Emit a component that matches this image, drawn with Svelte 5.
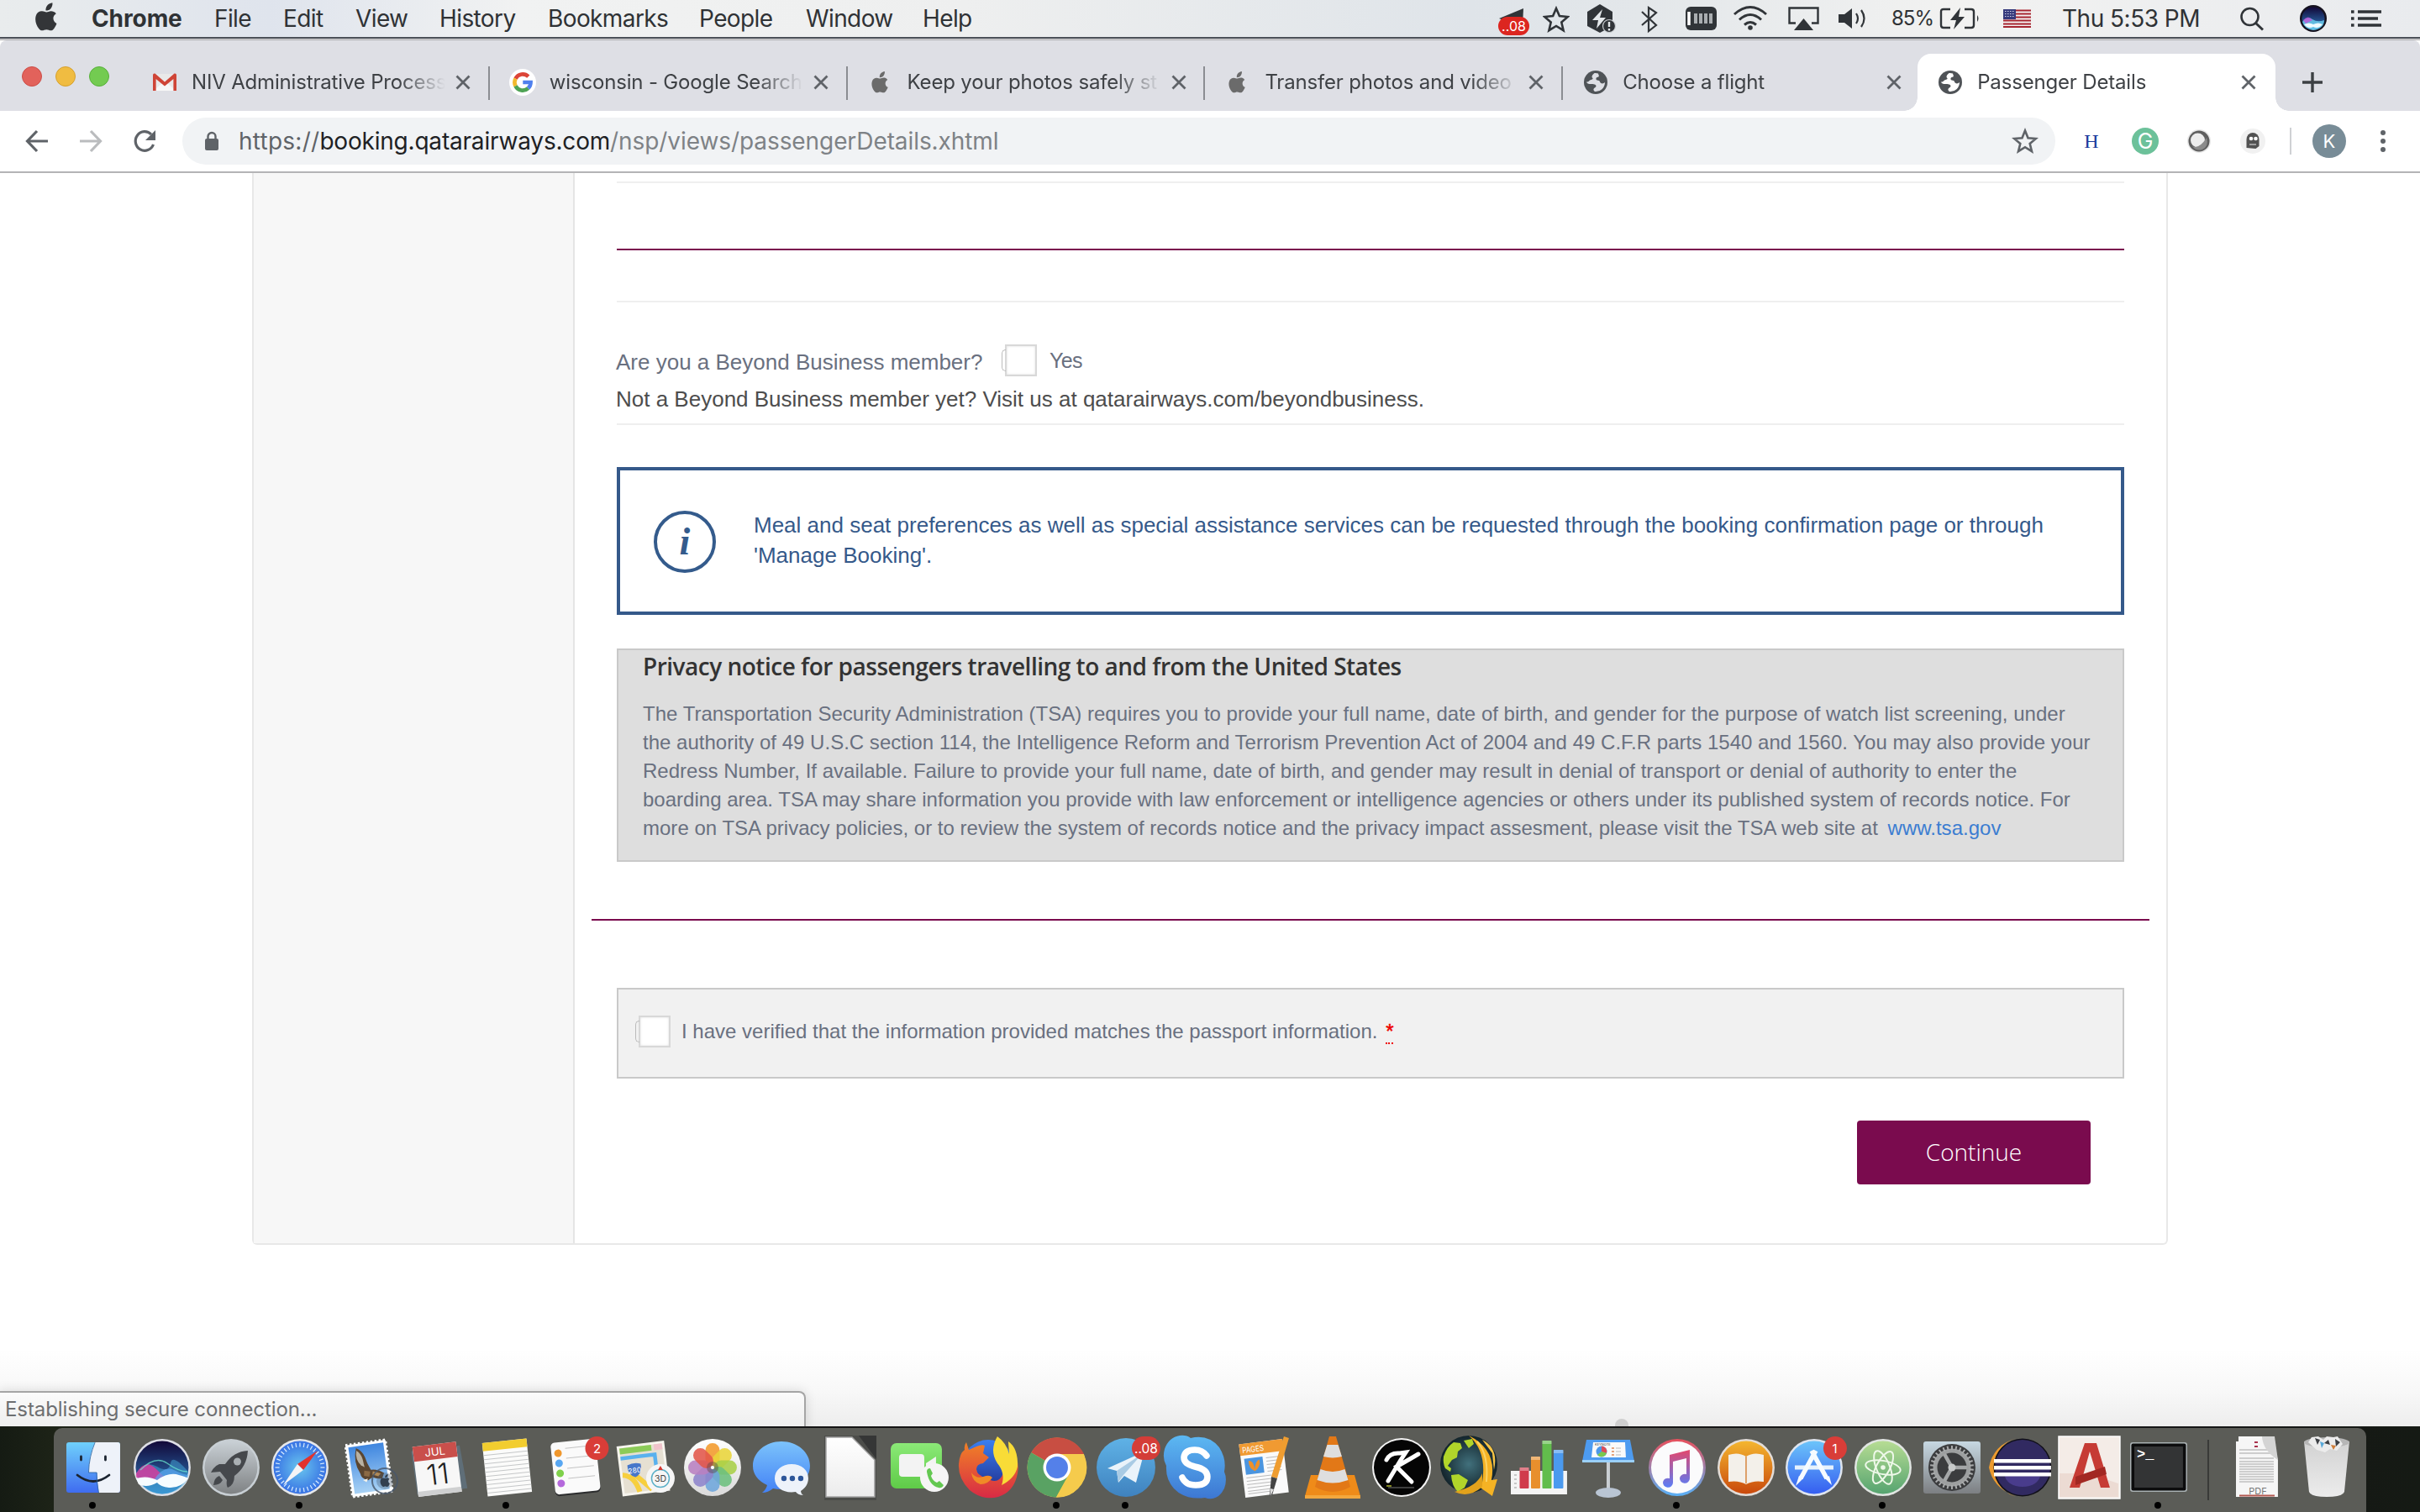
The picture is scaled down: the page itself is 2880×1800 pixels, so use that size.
<script>
  const menus = ['File', 'Edit', 'View', 'History', 'Bookmarks', 'People', 'Window', 'Help'];
  const tabs = [
    { icon: 'gmail', title: 'NIV Administrative Process' },
    { icon: 'google', title: 'wisconsin - Google Search' },
    { icon: 'apple', title: 'Keep your photos safely st' },
    { icon: 'apple', title: 'Transfer photos and video' },
    { icon: 'globe', title: 'Choose a flight', last: true },
    { icon: 'globe', title: 'Passenger Details', active: true }
  ];
  const dock = [
    'finder', 'siri', 'rocket', 'safari', 'mail', 'calendar', 'notes', 'reminders', 'maps', 'photos',
    'messages', 'office', 'facetime', 'firefox', 'chrome', 'telegram', 'skype', 'pages', 'vlc', 'kodi',
    'jdown', 'numbers', 'keynote', 'itunes', 'books', 'appstore', 'atom', 'settings', 'eclipse',
    'autocad', 'terminal', 'sep', 'pdf', 'trash'
  ];
  const running = ['finder', 'safari', 'notes', 'chrome', 'telegram', 'itunes', 'atom', 'terminal'];
  const ticks = Array.from({ length: 36 }, (_, i) => i * 10);
  const teeth = Array.from({ length: 30 }, (_, i) => i * 12);
  const petals = [
    ['#f39a2b', 0], ['#e9d53a', 45], ['#a9cf47', 90], ['#6cbf7d', 135],
    ['#6ea6dc', 180], ['#8d84cc', 225], ['#b87fc0', 270], ['#e3564a', 315]
  ];
  const gradients = [
    ['gFinder', '#6fd0fb', '#3f6cf0'], ['gSiri', '#120838', '#2f7fc4'], ['gRocket', '#c9d0d5', '#7f8284'],
    ['gMail', '#3f86df', '#a8d2f5'], ['gMsg', '#7cc3fb', '#4382f6'], ['gPaper', '#ffffff', '#ececec'],
    ['gGreen', '#8be977', '#5fcb48'], ['gTg', '#5fb2e6', '#3f82bf'], ['gSky', '#5cb8f2', '#3d77d3'],
    ['gTunes', '#e8505c', '#58b0f7'], ['gNote', '#e3476c', '#5b7df6'], ['gBooks', '#f4b62f', '#c9490c'],
    ['gApp', '#6cc4fa', '#355ef0'], ['gAtom', '#b6dc93', '#56a470'], ['gSet', '#c7d8e2', '#7c7f82'],
    ['gTrash', '#d2d2d2', '#ececec'], ['gWhite', '#ffffff', '#dadada'], ['gFox', '#f08127', '#d82a45'],
    ['gFxBlue', '#3b7ff0', '#1f2f8e']
  ];
</script>

{#snippet apple()}
  <path d="M14.700 7.300C16.200 5.500 17.300 3 16.900 0 14.500.2 11.700 1.700 10.400 3.700 9.300 5.300 8.700 7.500 9 9.300c2.200.1 4.300-.5 5.700-2z" transform="translate(3.500 0)" />
  <path d="M13.300 11.200c-1.500 0-3.300-1.300-5.600-1.200C4.700 10.100 2 11.800 1 14.700c-2.200 5.600.2 12.300 3.200 16.100 1.200 1.600 2.500 2.400 4 2.300 1.800-.1 2.800-1.100 5.200-1.100 2.300 0 3.200 1.100 5.100 1.100 1.700 0 2.900-1.200 4-2.700 1.600-2.200 2.500-4.300 2.900-5.700-4.900-2.200-5.500-9-.6-11.800-1.600-2.200-3.900-3-6-3-2.500 0-4 1.300-5.500 1.300z" />
{/snippet}

{#snippet fav(kind, light)}
  {#if kind === 'gmail'}
    <svg width="32" height="32" viewBox="0 0 32 32">
      <path d="M3 6h26v20H3z" fill="#e9e9e9" /><path d="M3 26 16 14l13 12z" fill="#f7f7f7" />
      <path d="M2 26V7.500Q2 5 4.500 5.600L16 15.500 27.500 5.600Q30 5 30 7.500V26h-3.600V12L16 20.500 5.600 12v14z" fill="#cf4436" />
    </svg>
  {:else if kind === 'google'}
    <svg width="32" height="32" viewBox="0 0 32 32">
      <circle cx="16" cy="16" r="16" fill="#fff" />
      <g fill="none" stroke-width="4.600">
        <path d="M7.500 11.600A9.600 9.600 0 0 1 22.800 9.200" stroke="#dc4437" />
        <path d="M7.500 20.400a9.600 9.600 0 0 1 0-8.800" stroke="#f2b92d" />
        <path d="M22.600 23a9.600 9.600 0 0 1-15.100-2.600" stroke="#4ea355" />
        <path d="M16.300 16h9.300a9.600 9.600 0 0 1-3 7" stroke="#4f80ee" />
      </g>
    </svg>
  {:else if kind === 'apple'}
    <svg width="32" height="32" viewBox="-7 -4 42 42" fill="#6b6b6b">{@render apple()}</svg>
  {:else}
    <svg width="32" height="32" viewBox="0 0 32 32">
      <circle cx="16" cy="16" r="14" fill="#4f5357" />
      <path d="M19 5.400A11 11 0 0 0 14.500 5C12.500 6.500 11.500 8 11.500 9.500c0 1.200 1.500 1.500 1 2.500s-3.500 1-4.500 2.500c-.8 1.200-2 1-3 1 .5 2 2.500 2.500 5 2.500 3.500 0 6.500.5 6.500 2.500 0 1.800-2.500 2-3 3.500-.3 1 .2 2 1.500 3A11 11 0 0 0 27 16c-1.500 1.500-3.500 1.800-5 .8-1.300-.8-.8-2.300-2-2.800-1.500-.6-3 0-3.500-1.500-.4-1.500.8-2.500 2-2.700 1.500-.3 1.500-1.800 1-2.800-.3-.6-.5-1-.5-1.600z" fill={light ? '#fff' : '#dedfe5'} />
    </svg>
  {/if}
{/snippet}

{#snippet dockIcon(k)}
  {#if k === 'finder'}
    <rect x="-32" y="17" width="64" height="60" rx="3" fill="url(#gFinder)" />
    <path d="M2 17h27q3 0 3 3v54q0 3-3 3H6.500Q5 66 4.500 53H-5.500Q-5 32 2 17z" fill="#eef2f9" />
    <g stroke="#1b2430" fill="none" stroke-width="2.800" stroke-linecap="round">
      <path d="M-14.500 34v4M14.500 34v4" /><path d="M-19 56Q0 71 19 56" /><path d="M2 17.500Q-5 34-5.500 53H4Q4 66 6.500 77" stroke-width=".8" stroke="#2a5f9a" />
    </g>
  {:else if k === 'siri'}
    <circle cy="47" r="34" fill="#dedfe6" /><circle cy="47" r="31.500" fill="url(#gSiri)" />
    <path d="M-31 54Q-20 38-6 46T10 42t21 10Q32 66 16 75 0 82-16 75-30 66-31 54z" fill="#4ab6e6" opacity=".45" />
    <path d="M-31 54Q-20 36-8 48T8 62Q-4 60-10 63-22 68-31 58z" fill="#e0389c" opacity=".8" />
    <path d="M-10 62Q2 44 14 50T31 56Q26 64 12 66-2 68-10 62z" fill="#5aa4f0" opacity=".7" />
    <path d="M-31 60Q-18 56-6 62 8 52 20 56 28 58 31 60 22 72 8 71-2 70-6 65-18 72-28 67z" fill="#f6fcff" />
    <path d="M-26 50Q-8 32 6 42T30 52" stroke="#6ff0d4" stroke-width="1.500" fill="none" opacity=".7" />
  {:else if k === 'rocket'}
    <circle cy="47" r="34" fill="#c8cfd4" /><circle cy="47" r="31.500" fill="url(#gRocket)" />
    <path d="M20 27Q3 28-7 43l-7 0q-6 2-10 10l11-1 8 10q-1 6 1 9 8-3 8-14Q19 46 20 27z" fill="#45484c" />
    <path d="M-14 57q-6 2-7 11 8 0 11-6z" fill="#45484c" /><circle cx="7.500" cy="40" r="4.500" fill="#aab0b4" />
  {:else if k === 'safari'}
    <circle cy="47" r="34" fill="#e7e8ea" /><circle cy="47" r="31.500" fill="url(#gSafari)" />
    <g stroke="#d8ecff" stroke-width="1.200">{#each ticks as t}<path d="M0 17.500v5" transform="rotate({t} 0 47)" />{/each}</g>
    <path d="M21 27 4 50l-7-7z" fill="#e2322d" /><path d="M-20 68 4 50l-7-7z" fill="#f4f4f6" />
  {:else if k === 'mail'}
    <g transform="rotate(-8 0 47)">
      <rect x="-24" y="17" width="48" height="62" fill="#fff" stroke="#fff" stroke-width="3" stroke-dasharray="2.500 2.500" />
      <rect x="-21" y="20" width="42" height="56" fill="url(#gMail)" />
      <path d="M-12 22q7 4 9 12l2 8 3 8q8 0 15 6l-3 6q-7 0-11-3l-6 3q-8-3-8-9Q-18 38-12 22z" fill="#5b4631" />
      <path d="M-12 25q5 4 6 11l1 10-4-3q-6-8-3-18z" fill="#b9b1a2" /><path d="M-6 50l7 2-2 6-6-2z" fill="#8b6a45" /><path d="M4 52l9 4-3 3-7-3z" fill="#b08a58" /><path d="M-9 61l6-1-2 4z" fill="#f4f0e6" />
    </g>
    <circle cx="19" cy="63" r="15" fill="none" stroke="#48586c" stroke-width="2" opacity=".8" /><circle cx="19" cy="63" r="10" fill="#48586c" opacity=".35" />
    <g transform="translate(13.500 55) scale(.45)" fill="#33404f">{@render apple()}</g>
  {:else if k === 'calendar'}
    <g transform="rotate(-7 0 47)">
      <path d="M-29 24h58l3 52h-60z" fill="#5f6e78" /><rect x="-27" y="19" width="52" height="60" fill="#f7f7f7" /><rect x="-27" y="73" width="52" height="6" fill="#cfd0d1" />
      <rect x="-27" y="19" width="52" height="18" fill="#c94f4b" />
      <text x="-1" y="32.500" font-size="13" fill="#fff" text-anchor="middle">JUL</text>
      <text x="-1" y="67" font-size="34" font-weight="300" fill="#222" text-anchor="middle">11</text>
    </g>
  {:else if k === 'notes'}
    <g transform="rotate(-6 0 47)">
      <rect x="-26" y="15" width="53" height="64" fill="#fbfbfa" /><rect x="-26" y="15" width="53" height="10" fill="#f2cd2f" />
      <g stroke="#c5c7c8" stroke-width="1">{#each [30, 35, 40, 45, 50, 55, 60, 65, 70, 75] as y}<path d="M-26 {y}h53" />{/each}</g>
    </g>
  {:else if k === 'reminders'}
    <g transform="rotate(-6 0 47)">
      <rect x="-27" y="17" width="54" height="62" rx="5" fill="#2c2d2e" /><rect x="-27" y="15" width="54" height="62" rx="5" fill="#fafafa" />
      <circle cx="-19" cy="28" r="4.500" fill="#f0972c" /><circle cx="-19" cy="40" r="4.500" fill="#58a7f2" /><circle cx="-19" cy="52" r="4.500" fill="#7fd14b" /><circle cx="-19" cy="64" r="4.500" fill="#b569dc" />
      <path d="M-10 23h28M-10 35h32M-10 47h32M-10 59h32" stroke="#c4c4c4" stroke-width="1" />
    </g>
    <circle cx="25.500" cy="24" r="14" fill="#d93d38" /><text x="25.500" y="29.500" font-size="15" fill="#fff" text-anchor="middle">2</text>
  {:else if k === 'maps'}
    <g transform="rotate(-7 0 47)">
      <rect x="-30" y="18" width="57" height="60" fill="#f7f5ee" /><rect x="-27" y="21" width="51" height="54" fill="#e6e0d2" />
      <path d="M-27 21h38v7h-38z" fill="#8ccb58" /><path d="M14 21h10v7H14z" fill="#f0c3cb" /><path d="M-27 33H14v22" fill="none" stroke="#59b1ee" stroke-width="4.500" />
      <path d="M-27 53q14 2 18 22M-16 50l22 24" stroke="#f7cf3e" stroke-width="6" fill="none" />
      <path d="M-20 42q8-3 16 0 1 12-8 15-9-3-8-15z" fill="#4877c9" /><text x="-12" y="52" font-size="8.500" fill="#fff" text-anchor="middle">280</text>
    </g>
    <circle cx="19" cy="60" r="17" fill="#f6f6f6" /><circle cx="19" cy="60" r="10.500" fill="none" stroke="#5bb0c8" stroke-width="1.500" />
    <text x="19" y="64" font-size="10.500" fill="#444" text-anchor="middle">3D</text><path d="M19 45l3 5h-6z" fill="#d8382f" />
  {:else if k === 'photos'}
    <circle cy="47" r="34" fill="url(#gWhite)" />
    {#each petals as [c, a]}<rect x="-8.500" y="18" width="17" height="27" rx="8.500" fill={c} opacity=".88" transform="rotate({a} 0 47)" />{/each}
    <circle cy="47" r="7" fill="#5b4848" opacity=".45" /><circle cy="47" r="2" fill="#fff" />
  {:else if k === 'messages'}
    <path d="M0 16c19 0 34 13 34 29S19 73 0 73q-6 0-10-1-6 5-13 5 5-4 6-9-17-8-17-23C-34 29-19 16 0 16z" fill="url(#gMsg)" />
    <path d="M12 43c12 0 20 7 20 17 0 7-4 12-9 15q0 3 3 5-6 0-9-4l-5 .5C1 76.500-8 70-8 60s9-17 20-17z" fill="#edf2fa" />
    <g fill="#2d5699"><circle cx="3" cy="60" r="3.200" /><circle cx="13" cy="60" r="3.200" /><circle cx="23" cy="60" r="3.200" /></g>
  {:else if k === 'office'}
    <path d="M-31 9H31V86h-62z" fill="#4c4d4a" /><path d="M-29 11H2L29 38v44h-58z" fill="url(#gPaper)" stroke="#a3a3a3" stroke-width="1.500" /><path d="M10 9h21v28z" fill="#353636" />
  {:else if k === 'facetime'}
    <rect x="-34" y="18" width="61" height="54" rx="7" fill="url(#gGreen)" /><rect x="-24" y="31" width="30" height="27" rx="4" fill="#f3f3f3" /><path d="M8 42 20 34v22L8 49z" fill="#f3f3f3" />
    <circle cx="18" cy="59" r="17" fill="#f5f5f5" />
    <path d="M9 52q0-4 4-4l3 6-2 3q2 6 7 8l3-2 5 5q-2 4-6 3Q12 69 9 52z" fill="#63c851" />
  {:else if k === 'firefox'}
    <circle cy="45" r="31" fill="url(#gFxBlue)" />
    <path d="M-26 17l3 9 9-4q7-3 10-1l-2 9 7 5-7 7q-8 1-8 7 1 8 11 10Q12 69 18 54L28 28Q38 38 35 54 31 76 12 82-6 87-22 74-36 60-35 43-34 30-28 26-29 21-26 17z" fill="url(#gFox)" />
    <path d="M11 10Q1 27 11 42q10 12 5 26Q32 60 35 46 36 24 24 16L25 31Q22 18 11 10z" fill="#f9dc37" />
    <path d="M-20 53q6 8 14 5 8-3 11 1-5 8-14 8-10-3-11-14z" fill="#f08b27" />
  {:else if k === 'chrome'}
    <circle cy="47" r="35.500" fill="#f5cb4c" />
    <path d="M0 47-30.700 29.200A35.500 35.500 0 0 1 32 31z" fill="#c84e42" /><path d="M-30.700 29.200A35.500 35.500 0 0 0-1 82.500L14 55 0 47z" fill="#59a263" /><path d="M0 31H32q8 24-7 41-10 11-26 10.500L14 56z" fill="#f5cb4c" />
    <circle cy="47" r="16.500" fill="#fff" /><circle cy="47" r="13" fill="#5480e9" />
  {:else if k === 'telegram'}
    <circle cy="47" r="35" fill="url(#gTg)" />
    <path d="M-22 48 22 28 12 65-2 57l-7 8-2-14z" fill="#eaf3fa" /><path d="M-11 51 19 31-3 56l-6 8z" fill="#a9cbe4" />
    <rect x="7" y="10" width="34" height="28" rx="14" fill="#d43d38" /><text x="24" y="29.500" font-size="15.500" fill="#fff" text-anchor="middle">..08</text>
  {:else if k === 'skype'}
    <path d="M-18 9q8-1 13 3Q16 7 29 23q9 14 6 29 4 9 0 20-8 16-23 11Q-12 86-25 72q-10-11-9-27-5-9-2-20 5-14 18-16z" fill="url(#gSky)" />
    <path d="M14 33Q9 26 0 26q-12 0-13 9 0 8 13 11 15 3 15 12 0 10-14 10-12 0-16-9" fill="none" stroke="#fff" stroke-width="7.500" stroke-linecap="round" />
  {:else if k === 'pages'}
    <g transform="rotate(-7 0 47)"><rect x="-26" y="16" width="52" height="64" fill="#fafafa" /><rect x="-26" y="16" width="52" height="14" fill="#f09a32" />
      <text x="-23" y="27" font-size="9.500" textLength="26" lengthAdjust="spacingAndGlyphs" fill="#fff">PAGES</text><rect x="-22" y="34" width="22" height="19" fill="#4b95df" /><path d="M-17 37q6 0 6 11 2-10 7-11 1 9-7 13-7-4-6-13z" fill="#ef9028" />
      <g stroke="#bbb" stroke-width="1">{#each [57, 61, 65, 69, 73, 76] as y}<path d="M-22 {y}h30" />{/each}<path d="M4 36h17M4 40h17M4 44h17M4 48h17M4 52h17" /></g></g>
    <path d="M24 10l6 2-14 48-7-2z" fill="#ef9d30" /><path d="M9 58l7 2-6 20-3 1z" fill="#444" /><path d="M8 72l4 1-4 8z" fill="#ddd" />
  {:else if k === 'vlc'}
    <path d="M-26 56h52l7 25h-66z" fill="#ef8b19" /><path d="M-33 80h66v4h-66z" fill="#f3a73d" />
    <path d="M-4 10h8L21 70Q0 82-21 70z" fill="#e27817" /><path d="M-6.500 20H6.500l4.500 14q-11 3-22 0zM-14.500 49q14.500 6 29 0l4 13q-18.500 7-37 0z" fill="#dedede" />
  {:else if k === 'kodi'}
    <circle cy="47" r="35" fill="#f3f3f3" /><circle cy="47" r="33" fill="#050505" />
    <path d="M-18 38q4-9 16-8l7-1-6 9-15 25M20 31Q10 37-6 46l18 18" fill="none" stroke="#fff" stroke-width="5" stroke-linecap="round" /><path d="M-18 69h6" stroke="#aeb32c" stroke-width="1.500" /><path d="M-16 71h31" stroke="#777" stroke-width="1" />
  {:else if k === 'jdown'}
    <circle cx="-2" cy="43" r="34" fill="url(#gEarth)" />
    <path d="M-32 34q4-12 12-17l8 1 2 6-5 4-1 7-6 3-5 7 4 3-1 4-6-4q-3-6-2-14zM-23 56l9-1 11 7-4 9-8 5q-7-6-8-20zM-8 15l10-2 2 6-6 5z" fill="#b1d52a" />
    <path d="M-2 9Q32 26 25 62l7-1-6 20-20-14 8-2Q20 28-2 9z" fill="#f5b324" />
    <path d="M14 14Q34 24 28 50L26 30z" fill="#f8c445" />
    <path d="M14 54Q8 70-19 76-2 84 14 70z" fill="#e2a21c" />
    <path d="M8 16q14 16 11 48" fill="none" stroke="#fbd365" stroke-width="2" />
  {:else if k === 'numbers'}
    <rect x="-34" y="51" width="67" height="28" fill="#f4f4f4" /><path d="M-30 56h3M-30 61h3M-30 66h3M-30 71h3" stroke="#999" />
    <rect x="-23.500" y="47" width="11" height="25" rx="1" fill="#d03b4c" /><rect x="-10" y="34" width="11" height="38" rx="1" fill="#e88f2d" /><rect x="3.500" y="15" width="11" height="57" rx="1" fill="#62bd4c" /><rect x="17" y="26" width="11.500" height="46" rx="1" fill="#4b9aef" />
    <path d="M-23.500 47h11v4h-11zM-10 34H1v4h-11zM3.500 15h11v4h-11zM17 26h11.500v4H17z" fill="#fff" opacity=".35" />
  {:else if k === 'keynote'}
    <rect x="-2" y="41" width="4" height="37" fill="#c9ced3" /><ellipse cy="77" rx="15" ry="6" fill="#b9c5d3" />
    <path d="M-26 14h52l5 26h-62z" fill="#4d9bf0" /><path d="M-31 38h62v3h-62z" fill="#9ad0fa" /><path d="M-18 17h38l1 18h-41z" fill="#fafafa" />
    <circle cx="-8" cy="28" r="6.500" fill="#4c98ea" /><path d="M-8 28v-6.500A6.500 6.500 0 0 1-2 30z" fill="#dd4d57" /><path d="M-8 28l6 2a6.500 6.500 0 0 1-11 2z" fill="#7bc84d" /><path d="M4 24h3M4 28h3M4 32h3" stroke="#d85" stroke-width="1.500" /><path d="M9 24h6M9 28h6M9 32h6" stroke="#bbb" /><text x="-16" y="20.500" font-size="4" fill="#333">KEYNOTE</text>
  {:else if k === 'itunes'}
    <circle cy="47" r="34" fill="url(#gTunes)" /><circle cy="47" r="31" fill="#fbfbfc" />
    <path d="M-9 32 15 26v34a6 5.500 0 1 1-4-5V36l-16 4v25a6 5.500 0 1 1-4-5z" fill="url(#gNote)" />
  {:else if k === 'books'}
    <circle cy="47" r="34" fill="#e3ddd8" /><circle cy="47" r="31.500" fill="url(#gBooks)" />
    <path d="M0 34q-9-6-21-2v32q12-2 21 3 9-5 21-3V32q-12-4-21 2z" fill="#f3f0ea" /><path d="M0 34v32" stroke="#cf6a14" stroke-width="1.200" />
  {:else if k === 'appstore'}
    <circle cy="47" r="34" fill="#dfe5ef" /><circle cy="47" r="31.500" fill="url(#gApp)" />
    <path d="M-23 47h46" stroke="#e6f2fd" stroke-width="5" /><path d="M2 27-16 60M-3 27 15 60" stroke="#f6fbff" stroke-width="5.500" /><path d="M-18 57l5 3-9 9zM13 60l5-3 3 11z" fill="#f6fbff" />
    <circle cx="25" cy="24" r="14" fill="#d93d38" /><text x="24.500" y="29.500" font-size="15" fill="#fff" text-anchor="middle">1</text>
  {:else if k === 'atom'}
    <circle cy="47" r="34" fill="#e1e5e2" /><circle cy="47" r="31.500" fill="url(#gAtom)" />
    <g fill="none" stroke="#eef8e9" stroke-width="2"><ellipse cy="47" rx="21" ry="8" transform="rotate(10 0 47)" /><ellipse cy="47" rx="21" ry="8" transform="rotate(68 0 47)" /><ellipse cy="47" rx="21" ry="8" transform="rotate(118 0 47)" /></g><circle cy="47" r="2.800" fill="#eef8e9" />
  {:else if k === 'settings'}
    <rect x="-34" y="16" width="68" height="62" rx="3" fill="url(#gSet)" /><circle cy="47" r="28" fill="#3b3c3e" /><circle cy="47" r="20" fill="none" stroke="#9d9fa0" stroke-width="5" />
    <g stroke="#a9abac" stroke-width="2">{#each teeth as t}<path d="M0 21v5" transform="rotate({t} 0 47)" />{/each}</g>
    <path d="M0 47h18M0 47l-9-16M0 47l-9 16" stroke="#a5a7a8" stroke-width="4.500" /><circle cy="47" r="4.500" fill="#c8caca" />
  {:else if k === 'eclipse'}
    <path d="M-5 12A35 36 0 0 0-5 82Q-33 72-38 47-33 20-5 12z" fill="#ec9a2f" /><circle cx="2" cy="47" r="34.500" fill="#111019" /><circle cx="2" cy="47" r="33" fill="#312a61" /><path d="M-19 56a21 14 0 0 0 42 0z" fill="#493c8c" />
    <g fill="#fff"><rect x="-32" y="37" width="68" height="4.500" /><rect x="-32" y="45" width="68" height="4.500" /><rect x="-32" y="53" width="68" height="4.500" /></g>
  {:else if k === 'autocad'}
    <rect x="-37" y="10" width="73" height="74" fill="#f4ece7" stroke="#fff" stroke-width="1.500" /><path d="M-36 54h34l36 12v16h-70z" fill="#ecdbd3" />
    <path d="M-6 18H8L24 71H13L0 28-12 71h-12z" fill="#c63b34" /><path d="M-17 58 18 46l2 9-37 13z" fill="#a22823" />
  {:else if k === 'terminal'}
    <rect x="-34" y="17" width="68" height="59" rx="3" fill="#a9b0b2" /><rect x="-32.500" y="18.500" width="65" height="56" rx="2" fill="#0c0c0d" /><rect x="-29" y="22" width="58" height="49" fill="#333435" />
    <text class="mono" x="-26" y="36" font-size="17" font-weight="700" fill="#fff">&gt;_</text>
  {:else if k === 'pdf'}
    <path d="M-26 16h3v-6H16l1 2 7 26v44h-50z" fill="#f6f6f6" />
    <g stroke="#a6a6a6" stroke-width="1">{#each [26, 30, 36, 40, 43, 46, 49, 52, 55, 58, 61, 64] as y}<path d="M-22 {y}h41" />{/each}</g>
    <path d="M5 10q1 17 19 28L20 10z" fill="#d4d4d4" /><text x="0" y="79" font-size="11" fill="#777" text-anchor="middle">PDF</text><path d="M-22 80.500h42" stroke="#b2574f" stroke-width="1.800" /><path d="M-4 17h4M-4 22h4" stroke="#a8324c" stroke-width="2" />
  {:else if k === 'trash'}
    <path d="M-27 16h54l-6 60q-2 6-21 6t-21-6z" fill="url(#gTrash)" /><ellipse cy="17" rx="27" ry="6" fill="#b6b6b6" />
    <path d="M-22 17l4-6 8-1 6 4 4-4 8 1 5-1 6 9-7 8-8-2-6 4-10-3z" fill="#ececec" /><path d="M-14 12l6 2-3 6zM-3 18l5-4 2 6zM10 13l6 4-5 5z" fill="#3c3f44" /><path d="M-8 16l5 2-3 6z" fill="#58a8d8" /><path d="M5 20l6 1-3 5z" fill="#cf7c38" />
  {/if}
{/snippet}

<svg class="defs" aria-hidden="true">
  <defs>
    {#each gradients as [id, a, b]}
      <linearGradient {id} x1="0" y1="0" x2="0" y2="1"><stop offset="0" stop-color={a} /><stop offset="1" stop-color={b} /></linearGradient>
    {/each}
    <radialGradient id="gSafari"><stop offset="0" stop-color="#69c6ee" /><stop offset="1" stop-color="#3872e4" /></radialGradient>
    <radialGradient id="gEarth"><stop offset="0" stop-color="#41707c" /><stop offset="1" stop-color="#13242b" /></radialGradient>
  </defs>
</svg>

<div class="screen">
  <header class="menubar">
    <svg class="mapple" width="26" height="34" viewBox="0 0 26 33.500" fill="#333538">{@render apple()}</svg>
    <nav class="menus">
      <b>Chrome</b>
      {#each menus as m}<span>{m}</span>{/each}
    </nav>
    <div class="status">
      <svg width="40" height="44" viewBox="0 0 40 44"><path d="M1 22 30 10l-1 20-12-2z" fill="#303438" /><rect x="0" y="20" width="37" height="22" rx="11" fill="#dc2620" /><text x="18.500" y="37" font-size="16" fill="#fff" text-anchor="middle">..08</text></svg>
      <svg width="32" height="44" viewBox="0 0 32 44"><path d="M16 10l3.900 9.100 9.900.9-7.500 6.500 2.300 9.700L16 31l-8.600 5.200 2.300-9.700L2.200 20l9.900-.9z" fill="none" stroke="#303438" stroke-width="2.600" /></svg>
      <svg width="36" height="44" viewBox="0 0 36 44"><path d="M16 5l15 9v17l-15 8-15-8V14z" fill="#303438" /><path d="M19 11 7 24h7l-2 10 11-13h-7z" fill="#e4e8eb" /><circle cx="27" cy="31" r="7.500" fill="#303438" stroke="#c9cdd0" stroke-width="1.200" /><path d="M27 26v6M27 34v2.500" stroke="#e4e8eb" stroke-width="2.400" /></svg>
      <svg width="22" height="44" viewBox="0 0 22 44"><path d="M2 14l17 16-9 7V9l9 6L2 30" fill="none" stroke="#303438" stroke-width="2.200" /></svg>
      <svg width="37" height="44" viewBox="0 0 37 44"><rect y="8" width="37" height="28" rx="6" fill="#303438" /><path d="M4 14v16" stroke="#fff" stroke-width="3.500" /><path d="M12 16v12M18 16v12M24 16v12M30 16v12" stroke="#a9adb0" stroke-width="4" /></svg>
      <svg width="42" height="44" viewBox="0 0 42 44"><g fill="none" stroke="#303438" stroke-width="3"><path d="M2 17Q21 0 40 17" /><path d="M8 23.500q13-12 26 0" /><path d="M14 29.500q7-6 14 0" /></g><circle cx="21" cy="33" r="2.800" fill="#303438" /></svg>
      <svg width="37" height="44" viewBox="0 0 37 44"><path d="M9 27.500H1.500V9.500h34v18H28" fill="none" stroke="#303438" stroke-width="2.400" /><path d="M18.500 22 30 36H7z" fill="#303438" /></svg>
      <svg width="36" height="44" viewBox="0 0 36 44"><path d="M0 17h7l9-7v24l-9-7H0z" fill="#303438" /><g fill="none" stroke="#303438" stroke-width="2.200"><path d="M21 16q4 6 0 12M27 12q7 10 0 20" /></g></svg>
      <span class="pct">85%</span>
      <svg width="48" height="44" viewBox="0 0 48 44"><g fill="none" stroke="#303438" stroke-width="2.400"><path d="M13 11H5q-3 0-3 3v16q0 3 3 3h8M30 11h8q3 0 3 3v16q0 3-3 3h-8" /></g><path d="M45 18q3 4 0 8z" fill="#303438" /><path d="M25 9 13 24h7l-3 11 13-15h-7z" fill="#303438" /></svg>
      <svg width="33" height="44" viewBox="0 0 33 44"><rect y="11" width="33" height="22" fill="#f4f0f0" /><path d="M0 12.500h33M0 16.500h33M0 20.500h33M0 24.500h33M0 28.500h33M0 32h33" stroke="#a5242f" stroke-width="1.900" /><rect y="11" width="15" height="12" fill="#363a7c" /><path d="M2 13.500h12M2 16.500h12M2 19.500h12" stroke="#cfd1e4" stroke-width="1" stroke-dasharray="1.500 1.500" /></svg>
      <span class="clock">Thu 5:53 PM</span>
      <svg width="32" height="44" viewBox="0 0 32 44"><circle cx="12.500" cy="20" r="10" fill="none" stroke="#303438" stroke-width="2.600" /><path d="M19.500 27.500l8.500 8" stroke="#303438" stroke-width="3" /></svg>
      <svg width="34" height="44" viewBox="0 0 34 44"><circle cx="16" cy="22" r="16" fill="#15121f" /><circle cx="16" cy="22" r="13.500" fill="url(#gSiri)" /><path d="M3 26q6-7 12-3t14 1q0 10-13 12Q5 34 3 26z" fill="#6fd3f2" opacity=".8" /><path d="M5 29q6-3 11 0 6-3 11 0-5 6-11 3-6 3-11-3z" fill="#eefaff" /><path d="M4 24q6-7 11 0l-8 4z" fill="#c055d8" opacity=".8" /></svg>
      <svg width="38" height="44" viewBox="0 0 38 44"><path d="M9 14h28M9 22h24M9 30h28" stroke="#303438" stroke-width="3.600" /><path d="M1 14h3.600M1 22h3.600M1 30h3.600" stroke="#303438" stroke-width="3.600" /></svg>
    </div>
  </header>

  <div class="backwin"></div>

  <div class="tabstrip">
    <div class="lights"><i class="r"></i><i class="y"></i><i class="g"></i></div>
    {#each tabs as t}
      <div class="tab" class:active={t.active} class:last={t.last}>
        {@render fav(t.icon, t.active)}
        <span class="title">{t.title}</span>
        <svg class="x" width="18" height="18" viewBox="0 0 18 18"><path d="M1.500 1.500l15 15M16.500 1.500l-15 15" stroke="#5f6368" stroke-width="2.800" /></svg>
      </div>
    {/each}
    <svg class="plus" width="26" height="26" viewBox="0 0 26 26"><path d="M13 1v24M1 13h24" stroke="#3c4043" stroke-width="3.400" /></svg>
  </div>

  <div class="toolbar">
    <svg width="28" height="28" viewBox="0 0 28 28"><path d="M27 14H3M14 2 2.500 14 14 26" fill="none" stroke="#5f6368" stroke-width="3.200" /></svg>
    <svg width="28" height="28" viewBox="0 0 28 28"><path d="M1 14h24M14 2l11.500 12L14 26" fill="none" stroke="#babcbe" stroke-width="3.200" /></svg>
    <svg width="30" height="30" viewBox="0 0 30 30"><path d="M25.500 19A11 11.300 0 1 1 23 7" fill="none" stroke="#5f6368" stroke-width="3.200" /><path d="M28 2v12H16z" fill="#5f6368" /></svg>
    <div class="omni">
      <svg width="18" height="24" viewBox="0 0 18 24"><rect x="1" y="9" width="16" height="14" rx="2" fill="#5f6368" /><path d="M4.500 10V6.500a4.500 4.500 0 0 1 9 0V10" fill="none" stroke="#5f6368" stroke-width="2.400" /></svg>
      <span class="url"><span class="sch">https://</span><span class="host">booking.qatarairways.com</span><span class="path">/nsp/views/passengerDetails.xhtml</span></span>
      <svg width="32" height="32" viewBox="0 0 32 32"><path d="M16 3.500l3.500 8.800 9.400.7-7.200 6 2.300 9.200L16 23.200l-8 5 2.300-9.200-7.200-6 9.400-.7z" fill="none" stroke="#5f6368" stroke-width="2.600" /></svg>
    </div>
    <div class="exts">
      <span class="h">H</span>
      <span class="gr">G</span>
      <svg width="32" height="32" viewBox="0 0 32 32"><circle cx="16" cy="16" r="14" fill="#e8e8e8" /><circle cx="16" cy="16" r="12.500" fill="#5f5f5f" /><circle cx="14.500" cy="15" r="8.500" fill="#ededed" /><path d="M8 22Q16 26 25 12q3 10-5 14-8 2-12-4z" fill="#8b8b8b" /></svg>
      <svg width="32" height="32" viewBox="0 0 32 32"><circle cx="16" cy="16" r="15" fill="#f1f1f1" /><path d="M8.500 24V14a7.500 8 0 0 1 15 0v8l-4 3z" fill="#525252" /><circle cx="14" cy="13" r="2.300" fill="#fff" /><circle cx="19.500" cy="13" r="2.300" fill="#fff" /><path d="M12 20h8" stroke="#bbb" stroke-width="1.500" /></svg>
    </div>
    <i class="vsep"></i>
    <span class="avatar">K</span>
    <svg width="8" height="28" viewBox="0 0 8 28"><g fill="#5f6368"><circle cx="4" cy="4" r="3" /><circle cx="4" cy="14" r="3" /><circle cx="4" cy="24" r="3" /></g></svg>
  </div>

  <main class="page">
    <div class="card">
      <aside></aside>
      <section>
        <hr class="light h1" />
        <hr class="plum h2" />
        <hr class="light h3" />
        <div class="question">
          <span class="ask">Are you a Beyond Business member?</span>
          <i class="check"></i>
          <span class="yes">Yes</span>
        </div>
        <p class="notyet">Not a Beyond Business member yet? Visit us at qatarairways.com/beyondbusiness.</p>
        <hr class="light" />
        <div class="info">
          <svg width="76" height="76" viewBox="0 0 76 76"><circle cx="38" cy="38" r="35" fill="none" stroke="#345b8c" stroke-width="4" /><text x="38" y="53" text-anchor="middle">i</text></svg>
          <p>Meal and seat preferences as well as special assistance services can be requested through the booking confirmation page or through<br />'Manage Booking'.</p>
        </div>
        <div class="privacy">
          <h2>Privacy notice for passengers travelling to and from the United States</h2>
          <p>The Transportation Security Administration (TSA) requires you to provide your full name, date of birth, and gender for the purpose of watch list screening, under<br />the authority of 49 U.S.C section 114, the Intelligence Reform and Terrorism Prevention Act of 2004 and 49 C.F.R parts 1540 and 1560. You may also provide your<br />Redress Number, If available. Failure to provide your full name, date of birth, and gender may result in denial of transport or denial of authority to enter the<br />boarding area. TSA may share information you provide with law enforcement or intelligence agencies or others under its published system of records notice. For<br />more on TSA privacy policies, or to review the system of records notice and the privacy impact assesment, please visit the TSA web site at <a href="#tsa">www.tsa.gov</a></p>
        </div>
        <hr class="plum wide" />
        <div class="verify">
          <i class="check"></i>
          <span>I have verified that the information provided matches the passport information. <em>*</em></span>
        </div>
        <div class="actions"><button>Continue</button></div>
      </section>
    </div>
    <i class="blob"></i>
    <div class="bubble"><span>Establishing secure connection...</span></div>
  </main>

  <footer class="desktop">
    <div class="dock">
      {#each dock as d}
        {#if d === 'sep'}
          <i class="dsep"></i>
        {:else}
          <svg width="81.940" height="100" viewBox="-41 0 82 100">
            {@render dockIcon(d)}
            {#if running.includes(d)}<circle cx="-1" cy="92" r="4" fill="#000" />{/if}
          </svg>
        {/if}
      {/each}
    </div>
  </footer>
</div>

<style>
  :global(body) { background: #fff; overflow: hidden; }
  .defs { position: absolute; width: 0; height: 0; }
  .screen { width: 2880px; height: 1800px; display: flex; flex-direction: column; font-family: Inter, "Liberation Sans", sans-serif; overflow: hidden; background: #fff; }
  svg { display: block; flex: none; }
  i { font-style: normal; }

  .menubar { height: 44px; flex: none; display: flex; align-items: center; color: #2f3235; font-size: 28px; line-height: 44px; white-space: nowrap;
    background: linear-gradient(90deg, #e9eced 0, #dfe4ed 320px, #f1f2f2 620px, #eeefef 1150px, #dfe4e9 1750px, #e3e7ea 1950px, #f2f2f1 2330px, #e9ebee 2880px); }
  .mapple { margin: -5px 0 0 42px; }
  .menus { display: grid; grid-template-columns: 146px 82px 86px 100px 129px 180px 127px 139px 80px; margin-left: 41px; letter-spacing: -.6px; }
  .menus b { font-weight: 700; letter-spacing: -.1px; }
  .status { display: grid; grid-template-columns: 53px 52px 64px 54px 56px 66px 60px 63px 57px 76px 70px 211px 72px 60px 40px; margin-left: 605px; }
  .pct { font-size: 24px; letter-spacing: -1px; }
  .clock { letter-spacing: -.5px; }

  .backwin { height: 4px; flex: none; background: linear-gradient(#4b5058 0 2px, #d6d6d8 2px 3px, #aeaeb0 3px 4px); }
  .tabstrip { height: 84px; flex: none; background: #dedfe5; display: flex; align-items: flex-end; border-radius: 8px 8px 0 0; }
  .lights { display: flex; gap: 16px; width: 131px; padding-left: 26px; height: 84px; align-items: center; }
  .lights i { width: 24px; height: 24px; border-radius: 50%; box-sizing: border-box; margin-bottom: -2px; }
  .r { background: #e2625b; border: 1px solid #cc4d47; } .y { background: #f0bc41; border: 1px solid #d6a02e; } .g { background: #73cb51; border: 1px solid #57b03a; }
  .tab { width: 425.800px; height: 68px; box-sizing: border-box; display: flex; align-items: center; padding-left: 23px; position: relative; }
  .tab::after { content: ""; position: absolute; right: 0; top: 15px; height: 40px; width: 2px; background: #8b8d92; }
  .tab.last { width: 422px; }
  .tab.last::after { display: none; }
  .tab.active { background: #fff; border-radius: 16px 16px 0 0; }
  .tab.active::before, .tab.active::after { content: ""; display: block; position: absolute; top: auto; bottom: 0; width: 16px; height: 16px; }
  .tab.active::before { left: -16px; background: radial-gradient(circle at 0 0, transparent 15.500px, #fff 16px); }
  .tab.active::after { right: -16px; background: radial-gradient(circle at 100% 0, transparent 15.500px, #fff 16px); }
  .title { width: 302px; margin-left: 16px; font-size: 24px; line-height: 68px; color: #3e4145; white-space: nowrap; letter-spacing: -.17px;
    mask-image: linear-gradient(90deg, #000 246px, transparent 302px); }
  .x { margin-left: 12px; }
  .plus { margin: 0 0 21px 31px; }

  .toolbar { height: 72px; flex: none; display: flex; align-items: center; padding-left: 30px; border-bottom: 2px solid #b4b4b6; background: #fff; }
  .toolbar > svg:nth-child(2) { margin-left: 36px; } .toolbar > svg:nth-child(3) { margin-left: 35px; }
  .omni { width: 2229px; height: 56px; border-radius: 28px; background: #f1f3f5; margin-left: 30px; display: flex; align-items: center; box-sizing: border-box; padding: 0 20px 0 26px; }
  .url { flex: 1; margin-left: 23px; font-size: 28px; line-height: 56px; white-space: nowrap; letter-spacing: -.2px; }
  .sch { color: #5f6368; letter-spacing: .25px; } .host { color: #202124; } .path { color: #7e8286; letter-spacing: -.08px; }
  .exts { display: flex; gap: 32px; margin-left: 27px; align-items: center; }
  .exts span { width: 32px; height: 32px; line-height: 32px; text-align: center; }
  .exts .h { font: 24px/32px "Liberation Serif", serif; color: #1c3a9c; }
  .gr { background: #6cc19a; color: #fff; border-radius: 50%; font-size: 25px; }
  .vsep { width: 2px; height: 32px; background: #cfd1d4; margin: 0 26px 0 28px; }
  .avatar { width: 40px; height: 40px; border-radius: 50%; background: #788c97; color: #fff; font-size: 22px; line-height: 40px; text-align: center; margin-right: 40px; margin-left: -1px; }

  .page { height: 1492px; flex: none; position: relative; overflow: hidden; font-family: "Liberation Sans", Arial, sans-serif; background: linear-gradient(#fff 0 1400px, #f8f8f8 1450px, #ededed 1492px); }
  .card { margin-left: 300px; width: 2280px; height: 1276px; box-sizing: border-box; border: 2px solid #e8e8e8; border-top: 0; border-radius: 0 0 6px 6px; display: flex; background: #fff; }
  aside { width: 380px; flex: none; background: #f7f7f7; border-right: 2px solid #e5e5e5; }
  section { flex: 1; padding: 10px 50px 0; }
  hr { border: 0; height: 2px; margin: 0; }
  p, h2 { margin: 0; }
  .light { background: #efefef; } .plum { background: #7a0b4e; }
  .h2 { margin-top: 78px; } .h3 { margin-top: 60px; }
  .question { height: 38px; margin-top: 50px; display: flex; align-items: center; font-size: 26px; color: #697080; white-space: nowrap; }
  .ask { width: 463px; padding-top: 4px; margin-left: -1px; }
  .check { width: 38px; height: 38px; box-sizing: border-box; border: 2px solid #d8d8d8; background: #fff; box-shadow: inset 0 0 3px #ddd; position: relative; }
  .check::before { content: ""; position: absolute; left: -6px; top: 4px; width: 5px; height: 26px; border: 1.500px solid #bbb; border-right: 0; border-radius: 8px 0 0 8px; box-sizing: border-box; }
  .yes { margin-left: 15px; font-size: 25px; letter-spacing: -.6px; }
  .notyet { font-size: 26px; line-height: 38px; color: #4d4d4d; margin: 8px 0 10px -1px; white-space: nowrap; }
  .info { margin-top: 50px; height: 176px; box-sizing: border-box; border: 4px solid #35598a; display: flex; padding: 47px 0 0 39px; color: #35598a; font-size: 26px; line-height: 36px; white-space: nowrap; }
  .info p { margin-left: 44px; }
  .info text { font: italic bold 46px "Liberation Serif", serif; fill: #345b8c; }
  .privacy { margin-top: 40px; height: 254px; box-sizing: border-box; border: 2px solid #c9c9c9; background: #dedede; padding: 0 30px 0 29px; color: #697080; font-size: 24px; line-height: 34px; white-space: nowrap; letter-spacing: .015px; }
  h2 { font: 600 28px/38px "Open Sans", sans-serif; color: #333; letter-spacing: -.5px; margin-bottom: 21px; }
  a { color: #3b7dd1; text-decoration: none; margin-left: 5px; }
  .wide { margin: 68px -30px 0; }
  .verify { margin-top: 80px; height: 108px; box-sizing: border-box; border: 2px solid #c9c9c9; background: #f1f1f1; display: flex; align-items: center; padding: 0 0 4px 24px; color: #697080; font-size: 24px; white-space: nowrap; }
  .verify span { margin-left: 13px; }
  em { font-style: normal; color: #e00; -webkit-text-stroke: .5px #e00; border-bottom: 2px dotted #e00; margin-left: 3px; }
  .actions { display: flex; justify-content: flex-end; padding: 50px 40px 0 0; }
  button { width: 278px; height: 76px; border: 0; border-radius: 4px; background: #7a0b4e; color: #fff; font: 300 28px/74px "Open Sans", sans-serif; padding: 0 0 2px; }
  .blob { position: absolute; left: 1922px; top: 1483px; width: 16px; height: 16px; border-radius: 50%; background: #cfcfcf; }
  .bubble { position: absolute; left: -2px; top: 1450px; width: 957px; height: 44px; border: 2px solid #a5a5a5; border-bottom: 0; border-radius: 0 8px 0 0; background: linear-gradient(#fbfbfb, #ededed); font: 24px/40px Inter, sans-serif; color: #6d6e70; box-shadow: 0 0 14px #0002; }
  .bubble span { margin-left: 6px; letter-spacing: -.09px; }

  .desktop { height: 102px; flex: none; background: linear-gradient(90deg, #151b13, #1d2317 64px, #141414 400px, #161616 2600px, #151a14); display: flex; align-items: flex-end; padding: 0 64px; box-sizing: border-box; }
  .dock { width: 2752px; height: 100px; background: #5b5c57; border-radius: 10px 10px 0 0; display: flex; padding-left: 6px; box-sizing: border-box; }
  .dsep { width: 2px; height: 72px; background: #393a38; margin: 14px 17px 0; }
  .dock svg { overflow: visible; }
  .mono { font-family: "Liberation Mono", monospace; }
</style>
